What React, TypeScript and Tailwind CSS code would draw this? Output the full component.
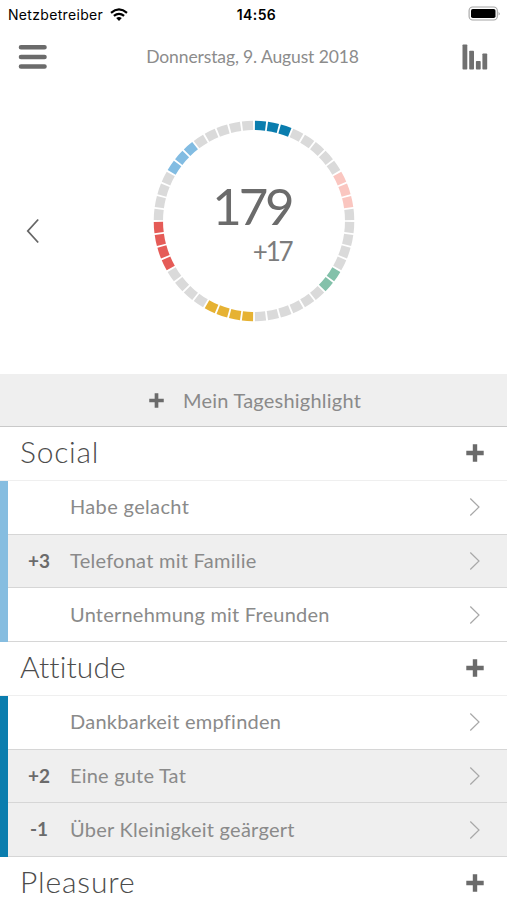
type Item = { name: string; value?: string; tracking: string };

type Category = {
    name: string;
    tracking: string;
    bar: string;
    items: Item[];
};

const categories: Category[] = [
    {
        name: "Social",
        tracking: "tracking-[0.75px]",
        bar: "bg-[#86bde0]",
        items: [
            { name: "Habe gelacht", tracking: "tracking-[0.35px]" },
            { name: "Telefonat mit Familie", value: "+3", tracking: "tracking-[0.26px]" },
            { name: "Unternehmung mit Freunden", tracking: "tracking-[0.22px]" },
        ],
    },
    {
        name: "Attitude",
        tracking: "tracking-[0.1px]",
        bar: "bg-[#0a7dae]",
        items: [
            { name: "Dankbarkeit empfinden", tracking: "tracking-[0.26px]" },
            { name: "Eine gute Tat", value: "+2", tracking: "tracking-[0.2px]" },
            { name: "Über Kleinigkeit geärgert", value: "-1", tracking: "tracking-[0.26px]" },
        ],
    },
    { name: "Pleasure", tracking: "tracking-[0.85px]", bar: "bg-[#e6b02e]", items: [] },
];

const SEGMENTS = 48;

// first segment, last segment, colour
const ranges: [number, number, string][] = [
    [0, 2, "#0a7dae"],
    [8, 10, "#fac6c0"],
    [16, 17, "#83c1aa"],
    [24, 27, "#e6b233"],
    [32, 35, "#e55b57"],
    [40, 42, "#82bce2"],
];

function segmentColor(index: number) {
    const range = ranges.find(([from, to]) => index >= from && index <= to);
    return range ? range[2] : "#dadada";
}

function Ring() {
    return (
        <svg className="col-start-1 row-start-1" width="204" height="204" viewBox="-102 -102 204 204">
            {Array.from({ length: SEGMENTS }, (_, i) => (
                <path
                    key={i}
                    d="M-5.6 -100.1Q0 -100.5 5.6 -100.1L5.1 -90.8Q0 -91.2 -5.1 -90.8Z"
                    fill={segmentColor(i)}
                    transform={`rotate(${(i + 0.5) * (360 / SEGMENTS)})`}
                />
            ))}
        </svg>
    );
}

function Plus({ size }: { size: number }) {
    return (
        <svg width={size} height={size} viewBox="0 0 18 18" fill="none" stroke="#6b6b6b" strokeWidth="4.4">
            <path d="M9 0.3V17.7M0.3 9H17.7" />
        </svg>
    );
}

function Chevron() {
    return (
        <svg width="12" height="20" viewBox="0 0 12 20" fill="none" stroke="#a8a8a8" strokeWidth="1.2">
            <path d="M1.3 1.5L10 10L1.3 18.5" />
        </svg>
    );
}

function StatusBar() {
    return (
        <div className="grid h-7 grid-cols-3 items-center pl-2 pr-[6px] font-['Inter',sans-serif] text-black">
            <div className="flex items-center gap-[7px]">
                <span className="text-[14px] tracking-[0.32px]">Netzbetreiber</span>
                <svg width="18" height="13" viewBox="0 0 18 13" fill="none" stroke="#000" strokeWidth="2.2">
                    <path d="M1 4.8Q9 -2 17 4.8" />
                    <path d="M3.9 7.9Q9 3.7 14.1 7.9" />
                    <path d="M6.2 10.1Q9 7.7 11.8 10.1L9 12.9Z" fill="#000" stroke="none" />
                </svg>
            </div>
            <span className="pl-1 text-center text-[14px] font-semibold tracking-[0.4px]">14:56</span>
            <svg className="justify-self-end" width="33" height="16" viewBox="0 0 33 16">
                <rect x="1.1" y="1" width="28.2" height="13" rx="3.6" fill="none" stroke="#a4a4a4" strokeWidth="1.1" />
                <rect x="3" y="3" width="24.5" height="9" rx="1.8" fill="#000" />
                <path d="M30.7 5.5Q32.4 7.5 30.7 9.6Z" fill="#888" />
            </svg>
        </div>
    );
}

function Header() {
    return (
        <div className="flex h-[58px] items-center justify-between pl-[18px] pr-[19px]">
            <svg width="30" height="26" viewBox="0 0 30 26" fill="none" stroke="#6b6b6b" strokeWidth="4.6" strokeLinecap="round">
                <path d="M3 3.3H26.5M3 13H26.5M3 22.5H26.5" />
            </svg>
            <span className="pr-[5px] text-[17.5px] tracking-[-0.12px] text-[#8c8c8c]">Donnerstag, 9. August 2018</span>
            <svg width="26" height="26" viewBox="0 0 26 26" fill="#707070">
                <rect x="0.5" y="0.5" width="4.8" height="25" rx="0.8" />
                <rect x="7.2" y="6.8" width="4.8" height="18.7" rx="0.8" />
                <rect x="13.9" y="17" width="4.8" height="8.5" rx="0.8" />
                <rect x="20.4" y="9.4" width="4.8" height="16.1" rx="0.8" />
            </svg>
        </div>
    );
}

function Score() {
    return (
        <div className="grid h-[288px] grid-cols-[1fr_204px_1fr] pt-[33px]">
            <svg className="ml-[26px] mt-[99px]" width="14" height="26" viewBox="0 0 14 26" fill="none" stroke="#666" strokeWidth="1.8">
                <path d="M12.2 1.5L1.8 13L12.2 24.5" />
            </svg>
            <div className="grid h-[204px]">
                <Ring />
                <div className="col-start-1 row-start-1 flex flex-col items-end pr-[64px] pt-[57px] text-[#6b6b6b]">
                    <span className="text-[51px] leading-[60px] tracking-[-3.2px]">179</span>
                    <span className="text-[26px] leading-[30px] tracking-[-2.2px] text-[#7c7c7c]">+17</span>
                </div>
            </div>
        </div>
    );
}

function ItemRow({ item }: { item: Item }) {
    return (
        <div
            className={`flex h-[53.75px] items-center border-b border-[#d6d6d6] pr-[26px] ${item.value ? "bg-[#efefef]" : "bg-white"}`}
        >
            <span className="w-[62px] text-center text-[19px] font-bold text-[#6b6b6b]">{item.value}</span>
            <span className={`flex-1 pb-[2px] text-[20px] text-[#8a8a8a] ${item.tracking}`}>{item.name}</span>
            <Chevron />
        </div>
    );
}

function CategorySection({ category }: { category: Category }) {
    return (
        <section>
            <div className="flex h-[53.75px] items-center justify-between border-b border-[#efefef] pl-5 pr-[23px]">
                <h2 className={`pb-1 text-[30px] font-light leading-9 text-[#4c4c4c] ${category.tracking}`}>
                    {category.name}
                </h2>
                <Plus size={18} />
            </div>
            <div className="flex">
                <div className={`w-2 ${category.bar}`} />
                <div className="flex-1">
                    {category.items.map((item) => (
                        <ItemRow key={item.name} item={item} />
                    ))}
                </div>
            </div>
        </section>
    );
}

export default function App() {
    return (
        <div className="h-[900px] w-[507px] overflow-hidden bg-white font-['Lato',sans-serif]">
            <StatusBar />
            <Header />
            <Score />
            <div className="flex h-[53px] items-center gap-[19px] border-b border-[#c9c9c9] bg-[#efefef] pl-[149px]">
                <Plus size={15} />
                <span className="text-[20px] tracking-[0.22px] text-[#8a8a8a]">Mein Tageshighlight</span>
            </div>
            {categories.map((category) => (
                <CategorySection key={category.name} category={category} />
            ))}
        </div>
    );
}
